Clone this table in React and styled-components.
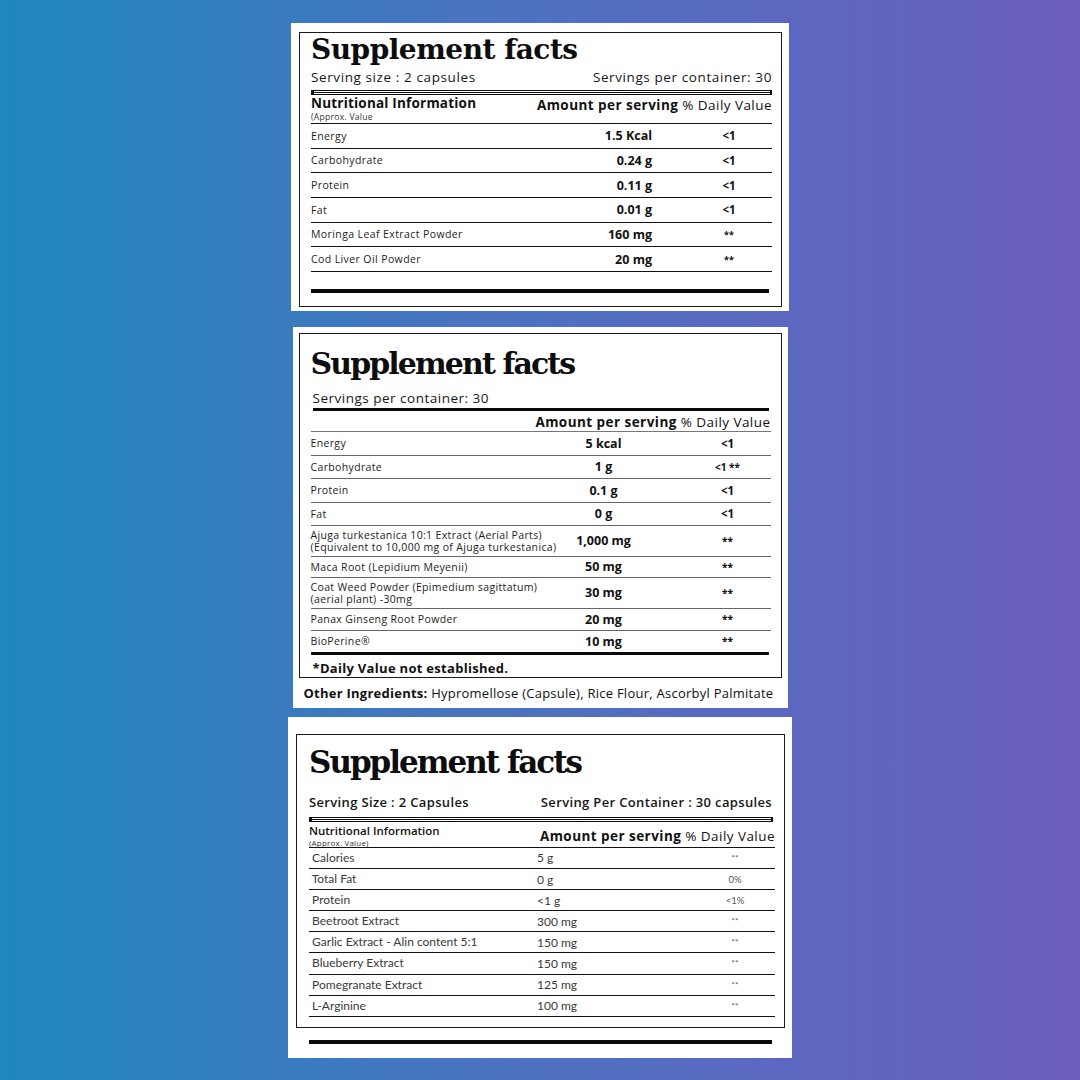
import React from 'react'
import styled, { createGlobalStyle } from 'styled-components'

const sans = `"Open Sans", "DejaVu Sans", sans-serif`
const serif = `"DejaVu Serif", "Liberation Serif", serif`
const light = `"Lato", "Open Sans", sans-serif`

const GlobalStyle = createGlobalStyle`
    html, body {
        margin: 0;
        padding: 0;
    }
    body {
        background: linear-gradient(90deg, #1e87bd 0%, #4b73c0 45%, #6c5dbf 100%);
        font-family: ${sans};
        color: #111;
    }
`

const Page = styled.main`
    width: 1080px;
    height: 1080px;
    box-sizing: border-box;
    padding-top: 23px;
    display: flex;
    flex-direction: column;
    align-items: center;
`

const Card = styled.section`
    width: ${({ $w }) => $w}px;
    margin-top: ${({ $mt }) => $mt || 0}px;
    padding: ${({ $pad }) => $pad};
    box-sizing: border-box;
    background: #fff;
`

const Frame = styled.div`
    border: 1px solid #1a1a1a;
    padding: ${({ $pad }) => $pad};
    display: flex;
    flex-direction: column;
`

const Title = styled.h1`
    margin: ${({ $mt }) => $mt || 0}px 0 0;
    font-family: ${serif};
    font-weight: 700;
    font-size: ${({ $size }) => $size}px;
    line-height: ${({ $lh }) => $lh}px;
    letter-spacing: ${({ $ls }) => $ls}px;
    color: #0d0d0d;
`

const InfoLine = styled.div`
    display: flex;
    justify-content: space-between;
    margin-top: ${({ $mt }) => $mt || 0}px;
    padding: 0 ${({ $pr }) => $pr || 0}px 0 ${({ $pl }) => $pl || 0}px;
    font-size: ${({ $size }) => $size || 13}px;
    font-weight: ${({ $weight }) => $weight || 400};
    letter-spacing: ${({ $ls }) => $ls || 0}px;
    line-height: 16px;
    color: #161616;
`

// thin double rule with heavier end caps, as printed on the labels
const DoubleRule = styled.div`
    margin: ${({ $mt }) => $mt}px ${({ $mr }) => $mr || 0}px 0 0;
    height: 1px;
    padding: 1px 0;
    border-top: 1px solid #111;
    border-bottom: 1px solid #111;
    border-left: 3px solid #111;
    border-right: 2px solid #111;
    background: linear-gradient(#111, #111) center / 100% 1px no-repeat;
    background-clip: content-box;
`

const HeadRow = styled.div`
    display: flex;
    justify-content: space-between;
    align-items: flex-start;
    box-sizing: border-box;
    height: ${({ $h }) => $h}px;
    padding-top: ${({ $pt }) => $pt || 0}px;
    margin-right: ${({ $mr }) => $mr || 0}px;
    border-bottom: 1px solid ${({ $line }) => $line || '#111'};
`

const HeadLeft = styled.div`
    display: flex;
    flex-direction: column;
`

const HeadLabel = styled.span`
    font-size: ${({ $size }) => $size || 13}px;
    font-weight: ${({ $weight }) => $weight || 700};
    letter-spacing: ${({ $ls }) => $ls || 0}px;
    line-height: 14px;
`

const HeadSub = styled.span`
    font-size: ${({ $size }) => $size || 8}px;
    letter-spacing: ${({ $ls }) => $ls || 0}px;
    line-height: 10px;
    margin-top: ${({ $mt }) => $mt || 0}px;
    color: #333;
`

const HeadRight = styled.span`
    font-size: 13.5px;
    letter-spacing: 0.45px;
    line-height: 16px;
    margin-top: ${({ $mt }) => $mt || 0}px;
    white-space: nowrap;

    strong {
        font-weight: 700;
    }
`

const Row = styled.div`
    display: grid;
    grid-template-columns: ${({ $cols }) => $cols};
    align-items: center;
    box-sizing: border-box;
    height: ${({ $h }) => $h}px;
    border-bottom: ${({ $line }) => ($line ? `1px solid ${$line}` : 'none')};
`

const Label = styled.span`
    font-family: ${({ $font }) => $font || sans};
    font-size: ${({ $size }) => $size}px;
    letter-spacing: ${({ $ls }) => $ls || 0}px;
    line-height: 12px;
    color: ${({ $color }) => $color || '#1c1c1c'};
    white-space: nowrap;
`

const Value = styled.span`
    font-family: ${({ $font }) => $font || sans};
    font-size: ${({ $size }) => $size}px;
    font-weight: ${({ $weight }) => $weight};
    color: ${({ $color }) => $color || '#111'};
    text-align: ${({ $align }) => $align};
    white-space: nowrap;
`

const Daily = styled.span`
    font-family: ${({ $font }) => $font || sans};
    font-size: ${({ $size }) => $size}px;
    font-weight: ${({ $weight }) => $weight};
    color: ${({ $color }) => $color || '#111'};
    text-align: center;
    white-space: nowrap;
`

const Bar = styled.div`
    height: ${({ $h }) => $h}px;
    background: #0a0a0a;
    margin: ${({ $mt }) => $mt}px ${({ $mr }) => $mr || 0}px 0 ${({ $ml }) => $ml || 0}px;
`

const Footnote = styled.p`
    margin: 5px 0 0 2px;
    font-size: 13px;
    font-weight: 700;
    letter-spacing: 0.3px;
    line-height: 16px;
`

const Other = styled.p`
    margin: 7px 0 0 5px;
    font-size: 13px;
    letter-spacing: 0.25px;
    line-height: 16px;
    white-space: nowrap;

    strong {
        font-weight: 700;
    }
`

const firstRows = [
    ['Energy', '1.5 Kcal', '<1'],
    ['Carbohydrate', '0.24 g', '<1'],
    ['Protein', '0.11 g', '<1'],
    ['Fat', '0.01 g', '<1'],
    ['Moringa Leaf Extract Powder', '160 mg', '**'],
    ['Cod Liver Oil Powder', '20 mg', '**'],
]

const secondRows = [
    { name: ['Energy'], amount: '5 kcal', dv: '<1', h: 24 },
    { name: ['Carbohydrate'], amount: '1 g', dv: '<1 **', h: 23 },
    { name: ['Protein'], amount: '0.1 g', dv: '<1', h: 24 },
    { name: ['Fat'], amount: '0 g', dv: '<1', h: 23 },
    {
        name: ['Ajuga turkestanica 10:1 Extract (Aerial Parts)', '(Equivalent to 10,000 mg of Ajuga turkestanica)'],
        amount: '1,000 mg',
        dv: '**',
        h: 31,
    },
    { name: ['Maca Root (Lepidium Meyenii)'], amount: '50 mg', dv: '**', h: 21 },
    { name: ['Coat Weed Powder (Epimedium sagittatum)', ' (aerial plant) -30mg'], amount: '30 mg', dv: '**', h: 31 },
    { name: ['Panax Ginseng Root Powder'], amount: '20 mg', dv: '**', h: 22 },
    { name: ['BioPerine®'], amount: '10 mg', dv: '**', h: 21, last: true },
]

const thirdRows = [
    ['Calories', '5 g', '**'],
    ['Total Fat', '0 g', '0%'],
    ['Protein', '<1 g', '<1%'],
    ['Beetroot Extract', '300 mg', '**'],
    ['Garlic Extract - Alin content 5:1', '150 mg', '**'],
    ['Blueberry Extract', '150 mg', '**'],
    ['Pomegranate Extract', '125 mg', '**'],
    ['L-Arginine', '100 mg', '**'],
]

const FirstPanel = () => (
    <Card $w={498} $pad="9px 7px 4px 8px">
        <Frame $pad="2px 9px 13px 11px">
            <Title $size={28} $lh={30} $ls={-0.5}>
                Supplement facts
            </Title>
            <InfoLine $mt={4} $size={13.5} $ls={0.6}>
                <span>Serving size : 2 capsules</span>
                <span>Servings per container: 30</span>
            </InfoLine>
            <DoubleRule $mt={5} />
            <HeadRow $h={29} $pt={1}>
                <HeadLeft>
                    <HeadLabel $size={13.5} $ls={0.2}>
                        Nutritional Information
                    </HeadLabel>
                    <HeadSub $size={8.5} $ls={0.3} $mt={2}>
                        (Approx. Value
                    </HeadSub>
                </HeadLeft>
                <HeadRight $mt={1}>
                    <strong>Amount per serving</strong> % Daily Value
                </HeadRight>
            </HeadRow>
            {firstRows.map(([name, amount, dv]) => (
                <Row key={name} $cols="minmax(0, 1fr) 110px 34px 86px" $h={24.67} $line="#111">
                    <Label $size={10.5} $ls={0.4}>
                        {name}
                    </Label>
                    <Value $size={12.5} $weight={700} $align="right">
                        {amount}
                    </Value>
                    <span />
                    <Daily $size={dv === '**' ? 9 : 11.5} $weight={700}>
                        {dv}
                    </Daily>
                </Row>
            ))}
            <Bar $h={4} $mt={17} $mr={3} />
        </Frame>
    </Card>
)

const SecondPanel = () => (
    <Card $w={495} $mt={16} $pad="6px 6px 7px 6px">
        <Frame $pad="0 10px 1px 11px">
            <Title $size={30} $lh={34} $ls={-1.9} $mt={13}>
                Supplement facts
            </Title>
            <InfoLine $mt={9} $pl={2} $size={13.5} $ls={0.5}>
                <span>Servings per container: 30</span>
            </InfoLine>
            <Bar $h={3} $mt={2} $ml={2} $mr={2} />
            <HeadRow $h={21} $pt={3} $line="#777">
                <span />
                <HeadRight>
                    <strong>Amount per serving</strong> % Daily Value
                </HeadRight>
            </HeadRow>
            {secondRows.map((row) => (
                <Row
                    key={row.name[0]}
                    $cols="253px 80px 41px 86px"
                    $h={row.h}
                    $line={row.last ? null : '#666'}
                >
                    <Label $size={10.5} $ls={0.35}>
                        {row.name.map((line, i) => (
                            <React.Fragment key={line}>
                                {i > 0 && <br />}
                                {line}
                            </React.Fragment>
                        ))}
                    </Label>
                    <Value $size={12.5} $weight={700} $align="center">
                        {row.amount}
                    </Value>
                    <span />
                    <Daily $size={row.dv === '<1' ? 11.5 : 10} $weight={700}>
                        {row.dv}
                    </Daily>
                </Row>
            ))}
            <Bar $h={3} $mt={0} $mr={2} />
            <Footnote>*Daily Value not established.</Footnote>
        </Frame>
        <Other>
            <strong>Other Ingredients:</strong> Hypromellose (Capsule), Rice Flour, Ascorbyl Palmitate
        </Other>
    </Card>
)

const ThirdPanel = () => (
    <Card $w={504} $mt={9} $pad="17px 7px 14px 8px">
        <Frame $pad="0 9px 10px 12px">
            <Title $size={31} $lh={36} $ls={-2} $mt={9}>
                Supplement facts
            </Title>
            <InfoLine $mt={14} $pr={3} $weight={600} $ls={0.35}>
                <span>Serving Size : 2 Capsules</span>
                <span>Serving Per Container : 30 capsules</span>
            </InfoLine>
            <DoubleRule $mt={7} $mr={2} />
            <HeadRow $h={26} $pt={2}>
                <HeadLeft>
                    <HeadLabel $size={11.5} $weight={600}>
                        Nutritional Information
                    </HeadLabel>
                    <HeadSub $ls={0.2}>(Approx. Value)</HeadSub>
                </HeadLeft>
                <HeadRight $mt={4}>
                    <strong>Amount per serving</strong> % Daily Value
                </HeadRight>
            </HeadRow>
            {thirdRows.map(([name, amount, dv]) => (
                <Row key={name} $cols="228px minmax(0, 1fr) 80px" $h={21.1} $line="#111">
                    <Label $size={12} $font={light} $color="#3a3a3a">
                        &nbsp;{name}
                    </Label>
                    <Value $size={12} $font={light} $weight={400} $color="#3a3a3a" $align="left">
                        {amount}
                    </Value>
                    <Daily $size={dv === '**' ? 8 : 9.5} $font={light} $weight={400} $color="#555">
                        {dv}
                    </Daily>
                </Row>
            ))}
        </Frame>
        <Bar $h={4} $mt={12} $ml={13} $mr={13} />
    </Card>
)

const App = () => (
    <>
        <GlobalStyle />
        <Page>
            <FirstPanel />
            <SecondPanel />
            <ThirdPanel />
        </Page>
    </>
)

export default App
